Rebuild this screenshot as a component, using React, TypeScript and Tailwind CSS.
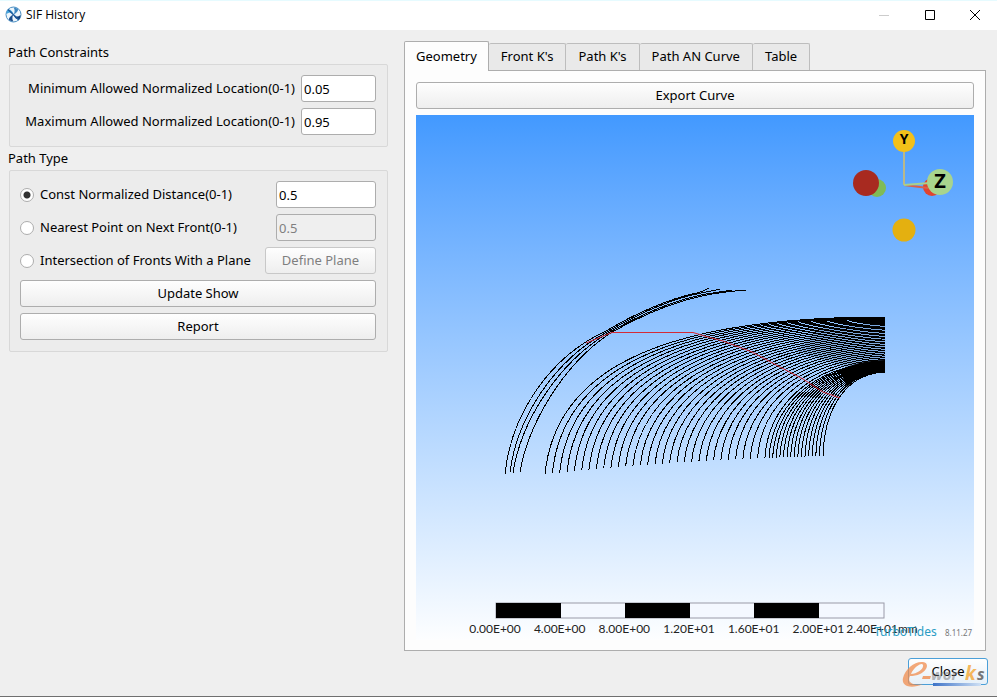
import React, { useState } from 'react';
import clsx from 'clsx';

const TABS = ['Geometry', "Front K's", "Path K's", 'Path AN Curve', 'Table'];

const BUTTON =
  'h-[27px] rounded-[3px] border border-[#adadad] bg-linear-to-b from-[#fefefe] to-[#eeeeee] text-center leading-[25px]';
const INPUT =
  'h-[27px] rounded-[3px] border border-[#adadad] bg-white px-[2px] outline-none disabled:bg-[#efefef] disabled:text-[#7f7f7f]';
const RADIO =
  'size-[14px] shrink-0 appearance-none rounded-full border border-[#adadad] bg-white checked:bg-[radial-gradient(circle,#333_0,#333_3px,#fff_4px)]';

// x of each crack front at the lower boundary
const FRONT_STARTS = [
  ...Array.from({ length: 31 }, (_, i) => 129 + i * 7.33),
  ...Array.from({ length: 16 }, (_, i) => 353 + i * 3.6),
];

const lerp = (a: number, b: number, t: number) => a + (b - a) * t;

const frontPath = (x: number) => {
  const s = (x - 129) / 278;
  const bow = Math.sin(s * Math.PI);
  const y0 = lerp(359, 341, s) - bow * 3;
  const yEnd = s < 0.8 ? lerp(202, 245, (s / 0.8) ** 1.3) : lerp(246, 257, (s - 0.8) / 0.2);
  return `M${x} ${y0}C${x + lerp(10, 1, s)} ${lerp(260, 299, s) + bow * 12} ${lerp(234, 426, s)} ${yEnd + 2 * s + bow * 5} 469 ${yEnd}`;
};

const OUTER_FRONTS = [
  'M89 359C95 300 133 242 190 216C220 198 255 183 281 178Q288 176 293 173',
  'M94 357C101 303 138 245 191 217C220 200 255 184 285 178Q296 176 304 174',
  'M97 358C105 306 142 248 192 218C222 201 258 185 290 179Q304 177 316 175',
  'M104 357C112 310 146 251 193 219C224 201 262 185 296 179Q314 176 330 175',
];

const TICKS = ['0.00E+00', '4.00E+00', '8.00E+00', '1.20E+01', '1.60E+01', '2.00E+01'];

const AppIcon = () => (
  <svg viewBox="0 0 17 17" className="size-[17px]">
    <circle cx="8.5" cy="8.5" r="7.5" fill="#eef6fb" stroke="#4a8fc4" />
    <path d="M2 4.500C4 2.500 7 4 8.500 8C6 6 4 6 1.500 8z" fill="#45a5dc" />
    <path d="M12.500 2.500C14 4 12 7 8.500 8.500C10 6 10 3.500 8.500 1.500z" fill="#3c86c0" />
    <path d="M15 12.500C13 14.500 10 13 8.500 9C11 11 13 11 15.500 9z" fill="#15417c" />
    <path d="M4.500 14.500C3 13 5 10 8.500 8.500C7 11 7 13.500 8.500 15.500z" fill="#1d4f8c" />
    <path d="M3 3.500L14 14" stroke="#1d5b9c" strokeWidth="1.500" />
  </svg>
);

const Viewport = () => (
  <div className="flex min-h-[524px] flex-1 justify-center bg-linear-to-b from-[#4299ff] to-[#fdfeff]">
    <svg viewBox="0 0 558 524" className="h-[524px] w-full" role="img" aria-label="Crack front geometry">
      <path d="M469 206L400 214L380 236L430 252L469 246z" fill="#5f86b4" opacity=".45" />
      <g fill="none" stroke="#000" strokeWidth="1" shapeRendering="crispEdges">
        {OUTER_FRONTS.map((d) => <path key={d} d={d} />)}
        {FRONT_STARTS.map((x) => <path key={x} d={frontPath(x)} />)}
      </g>
      <path d="M469 245C450 245 432 250 424 256L431 272C441 262 453 257 469 257z" />
      <path d="M170 228L196 217.500H277L292 222L307 226L336 237L364 252L387 264L407 277L424 283" fill="none" stroke="#d42a36" />

      {/* orientation gizmo */}
      <circle cx="461" cy="73" r="9" fill="#80bb55" />
      <circle cx="450" cy="68" r="13" fill="#a82a20" />
      <circle cx="516" cy="72" r="9" fill="#e0442f" />
      <path d="M488 70L512 73" stroke="#d8604a" strokeWidth="2" />
      <path d="M488 34V70" stroke="#b9b88a" strokeWidth="2" />
      <path d="M488 70L514 68" stroke="#a8d08d" strokeWidth="2" />
      <circle cx="488" cy="26" r="11" fill="#f3c019" />
      <circle cx="524" cy="67" r="13" fill="#a8d48d" />
      <circle cx="488" cy="115" r="11.500" fill="#e4b010" />
      <g className="font-['Open_Sans',sans-serif] font-bold" textAnchor="middle">
        <text x="488" y="29" fontSize="14">Y</text>
        <text x="524" y="73" fontSize="20">Z</text>
      </g>

      {/* scale bar */}
      <rect x="80" y="488" width="388" height="15" fill="#f4f8ff" stroke="#9a9aa8" />
      {[80, 209, 338].map((x) => <rect key={x} x={x} y="488" width="65" height="15" />)}
      <g className="font-['Lato',sans-serif]" fontSize="12" fill="#222" textAnchor="middle">
        {TICKS.map((t, i) => <text key={t} x={79 + i * 64.67} y="518">{t}</text>)}
        <text x="466" y="518">2.40E+01mm</text>
      </g>
      <g className="font-['Noto_Sans',sans-serif]">
        <text x="458" y="521" fontSize="12" fill="#2b9cc4">TurboTides</text>
        <text x="529" y="521" fontSize="8" fill="#777">8.11.27</text>
      </g>
    </svg>
  </div>
);

// translucent e-works mark that lies over the Close button
const WorksMark = () => (
  <svg viewBox="0 0 90 32" className="pointer-events-none absolute top-0 -left-[6px] h-[32px] w-[90px]" aria-hidden="true">
    <defs>
      <linearGradient id="underline">
        <stop offset="0" stopColor="#3f74c8" />
        <stop offset="1" stopColor="#cfe0f4" />
      </linearGradient>
    </defs>
    <path
      d="M21 26C10 31 -1 29 1 20C3 11 13 3 21 4C28 5 25 13 18 16C15 17.500 11 18 8 18C5 24 10 28 21 26zM9 16C15 16 22 11 21 7C20 4 12 9 9 16z"
      fill="#f08c4e"
      fillRule="evenodd"
      opacity=".75"
    />
    <path d="M21 18h8l-1 3h-8z" fill="#f08c4e" opacity=".8" />
    <path d="M31 25h48v3h-48z" fill="url(#underline)" />
    <g className="font-['Open_Sans',sans-serif] font-bold italic">
      <text x="29" y="22" fontSize="15" fill="#777" opacity=".5">wor</text>
      <text x="63" y="22" fontSize="19" fill="#f5b04a" opacity=".9">k</text>
      <text x="75" y="22" fontSize="16" fill="#777">s</text>
    </g>
  </svg>
);

export default function App() {
  const [tab, setTab] = useState('Geometry');
  const [mode, setMode] = useState('const');

  return (
    <div className="flex min-h-screen flex-col border-b border-[#6f6f6f] bg-[#efefef] font-['Noto_Sans',sans-serif] text-[13px] text-black">
      <header className="flex h-[30px] items-center border-t border-[#e6fbff] bg-white pb-[2px] pl-[5px]">
        <AppIcon />
        <h1 className="ml-1 flex-1 font-['Open_Sans',sans-serif] text-[12px]">SIF History</h1>
        <button aria-label="Minimize" className="flex h-full w-[46px] items-center justify-center">
          <svg viewBox="0 0 10 10" className="size-[10px]"><path d="M0 5.500h10" stroke="#ccc" /></svg>
        </button>
        <button aria-label="Maximize" className="flex h-full w-[46px] items-center justify-center">
          <svg viewBox="0 0 10 10" className="size-[10px]"><path d="M.5.5h9v9h-9z" fill="none" stroke="#000" /></svg>
        </button>
        <button aria-label="Close window" className="flex h-full w-[44px] items-center justify-center">
          <svg viewBox="0 0 10 10" className="size-[10px]"><path d="M0 0l10 10M10 0L0 10" stroke="#000" /></svg>
        </button>
      </header>

      <main className="flex flex-1 gap-4 pt-[11px] pr-[11px] pl-2">
        <div className="w-[380px] shrink-0">
          <h2 className="h-[23px] leading-[22px]">Path Constraints</h2>
          <section className="ml-px flex flex-col gap-[6px] rounded-[2px] border border-[#d8d8d8] bg-[#ececec] px-[11px] pt-[10px] pb-[11px]">
            <label className="flex items-center justify-end gap-[6px]">
              Minimum Allowed Normalized Location(0-1)
              <input className={clsx(INPUT, 'w-[75px]')} defaultValue="0.05" />
            </label>
            <label className="flex items-center justify-end gap-[6px]">
              Maximum Allowed Normalized Location(0-1)
              <input className={clsx(INPUT, 'w-[75px]')} defaultValue="0.95" />
            </label>
          </section>

          <h2 className="h-[23px] leading-[22px]">Path Type</h2>
          <section className="ml-px flex flex-col gap-[6px] rounded-[2px] border border-[#d8d8d8] bg-[#ececec] pt-[10px] pr-[11px] pb-[11px] pl-[10px]">
            <div className="flex items-center justify-between">
              <label className="flex items-center gap-[6px]">
                <input type="radio" name="mode" className={RADIO} checked={mode === 'const'} onChange={() => setMode('const')} />
                Const Normalized Distance(0-1)
              </label>
              <input aria-label="Const distance" className={clsx(INPUT, 'w-[100px]')} defaultValue="0.5" disabled={mode !== 'const'} />
            </div>
            <div className="flex items-center justify-between">
              <label className="flex items-center gap-[6px]">
                <input type="radio" name="mode" className={RADIO} checked={mode === 'nearest'} onChange={() => setMode('nearest')} />
                Nearest Point on Next Front(0-1)
              </label>
              <input aria-label="Nearest point" className={clsx(INPUT, 'w-[100px]')} defaultValue="0.5" disabled={mode !== 'nearest'} />
            </div>
            <div className="flex items-center justify-between">
              <label className="flex items-center gap-[6px]">
                <input type="radio" name="mode" className={RADIO} checked={mode === 'plane'} onChange={() => setMode('plane')} />
                Intersection of Fronts With a Plane
              </label>
              <button className={clsx(BUTTON, 'w-[111px] disabled:border-[#c8c8c8] disabled:text-[#7f7f7f]')} disabled={mode !== 'plane'}>Define Plane</button>
            </div>
            <button className={BUTTON}>Update Show</button>
            <button className={BUTTON}>Report</button>
          </section>
        </div>

        <div className="flex min-w-0 flex-1 flex-col">
          <div role="tablist" className="flex h-[29px] items-end">
            {TABS.map((t) => (
              <button
                key={t}
                role="tab"
                aria-selected={tab === t}
                onClick={() => setTab(t)}
                className={clsx(
                  'rounded-t-[2px] border-t border-r',
                  tab === t
                    ? 'z-10 -mb-px h-[30px] border-l border-[#adadad] bg-[#fdfdfd] px-[11px]'
                    : 'h-[27px] border-[#bdbdbd] bg-[#e9e9e9] px-[12px]',
                )}
              >
                {t}
              </button>
            ))}
          </div>
          <section className="flex flex-1 flex-col gap-[6px] border border-[#adadad] bg-[#fdfdfd] px-[11px] pt-[11px] pb-[10px]">
            <button className={BUTTON}>Export Curve</button>
            <Viewport />
          </section>
        </div>
      </main>

      <footer className="flex h-[45px] justify-end pt-[7px] pr-[9px]">
        <div className="relative">
          <button className="h-[27px] w-[80px] rounded-[3px] border border-[#4a9fd8] bg-linear-to-b from-[#fefefe] to-[#e6f0f8]">Close</button>
          <WorksMark />
        </div>
      </footer>
    </div>
  );
}
